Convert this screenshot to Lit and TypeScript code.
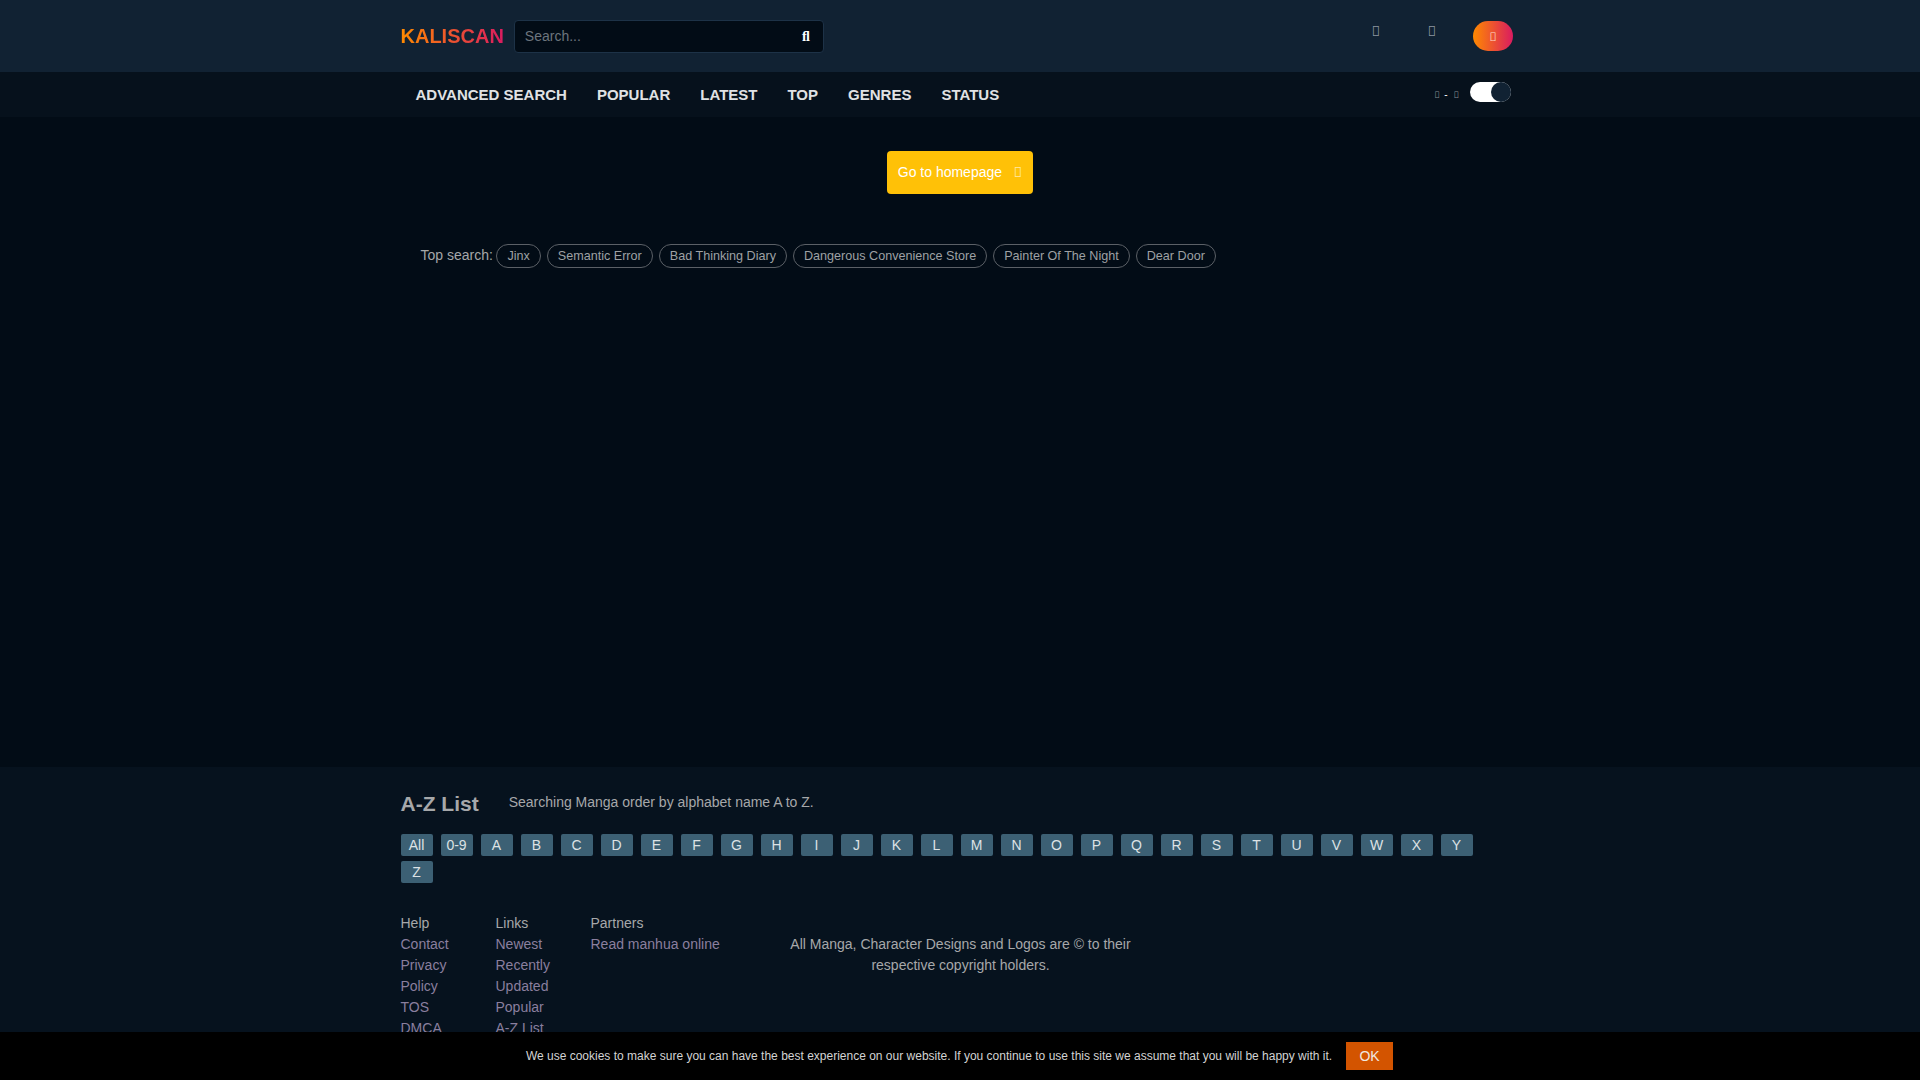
import { LitElement, html, css } from "lit";
import { customElement } from "lit/decorators.js";

const NAV = ["ADVANCED SEARCH", "POPULAR", "LATEST", "TOP", "GENRES", "STATUS"];
const TAGS = ["Jinx", "Semantic Error", "Bad Thinking Diary", "Dangerous Convenience Store", "Painter Of The Night", "Dear Door"];
const AZ = ["All", "0-9", ..."ABCDEFGHIJKLMNOPQRSTUVWXYZ".split("")];
const HELP = ["Contact", "Privacy Policy", "TOS", "DMCA"];
const LINKS = ["Newest", "Recently Updated", "Popular", "A-Z List"];

@customElement("app-root")
export class AppRoot extends LitElement {
  static styles = css`
    :host { display: block; height: 100vh; overflow: hidden; background: #020c16; color: #c5c6c7; font-family: "Liberation Sans", Arial, sans-serif; font-size: 14px; line-height: 21px; }
    .wrap { width: 1119px; margin: 0 auto; box-sizing: border-box; }
    a { color: inherit; text-decoration: none; }
    .fa { font-family: "Noto Sans", sans-serif; font-style: normal; }
    .top { background: #112233; height: 72px; }
    .top .wrap { display: flex; align-items: center; height: 72px; }
    .logo { font-size: 20px; font-weight: 700; line-height: 24px; background: linear-gradient(90deg, #ff8a00, #da1b60); -webkit-background-clip: text; background-clip: text; color: transparent; }
    .search { margin-left: 10px; width: 310px; height: 33px; box-sizing: border-box; border: 1px solid #1d3247; border-radius: 4px; background: #020c16; display: flex; align-items: center; justify-content: space-between; padding: 0 13px 0 10px; color: #6c757d; }
    .search b { color: #fff; font-family: "Liberation Serif", serif; font-size: 14px; font-weight: 700; }
    .icons { margin-left: auto; display: flex; align-items: center; }
    .ic { color: #8d97a1; font-size: 14px; width: 56px; text-align: center; margin-top: -12px; }
    .user { margin-left: 13px; margin-right: 6.5px; width: 40px; height: 30px; border-radius: 15px; background: linear-gradient(90deg, #ff8a00, #da1b60); color: #ffd9c8; font-size: 12px; display: flex; align-items: center; justify-content: center; }
    .nav { background: #06111c; height: 45px; }
    .nav .wrap { display: flex; align-items: center; height: 45px; }
    .nav a { color: #e0e2e4; font-size: 15px; font-weight: 600; margin-left: 15px; margin-right: 15px; }
    .mode { margin-left: auto; display: flex; align-items: center; color: #fff; font-size: 9px; margin-right: 8.5px; }
    .mode span { color: #8a9299; }
    .mode i { font-style: normal; font-size: 10px; margin: 0 6px 0 4.5px; }
    .toggle { margin-left: 11px; width: 41px; height: 20px; border-radius: 10px; background: #fff; position: relative; margin-top: -5px; }
    .toggle::after { content: ""; position: absolute; right: 0; top: 0; width: 20px; height: 20px; border-radius: 50%; background: #112233; }
    .main { height: 650px; padding-top: 34px; box-sizing: border-box; }
    .home { display: block; width: 146px; height: 43px; margin: 0 auto; box-sizing: border-box; background: #ffc107; border-radius: 4px; color: #fff; text-align: center; line-height: 42px; }
    .home span { color: #ffe9a8; margin-left: 4px; line-height: 1; }
    .tags { margin: 50px 0 0 20px; display: flex; align-items: center; gap: 6px; height: 24px; }
    .tags a { height: 24px; box-sizing: border-box; border: 1px solid #5b6066; border-radius: 12px; padding: 0 10px; font-size: 12.6px; line-height: 22px; color: #9ea1a4; }
    .tags label { color: #a5a7a9; margin-right: -2.5px; margin-top: -2px; }
    .foot { background: #06121e; height: 313px; padding-top: 22px; box-sizing: border-box; }
    .az-h { display: flex; align-items: baseline; }
    .az-h h3 { margin: 0; font-size: 21px; line-height: 30px; font-weight: 700; color: #a6a8aa; }
    .az-h span { margin-left: 30px; color: #a6a8aa; position: relative; top: -4px; }
    .letters { display: flex; flex-wrap: wrap; margin-top: 15px; }
    .letters a { width: 32px; height: 22px; margin: 0 8px 5px 0; box-sizing: border-box; border-radius: 2px; background: #3c6074; color: #dde2e5; text-align: center; line-height: 22px; }
    .cols { display: flex; margin-top: 25px; }
    .col { width: 58px; margin-right: 37px; color: #8a7f9e; }
    .col + .col { margin-right: 37px; }
    .col.p { width: 130px; margin-right: 60px; }
    .col h4 { margin: 0; font: inherit; color: #a6a8aa; }
    .col a { display: block; }
    .copy { width: 360px; text-align: center; margin-top: 21px; color: #a6a8aa; }
    .cookie { position: fixed; left: 0; right: 0; bottom: 0; height: 48px; background: #000; color: #d3d3d3; display: flex; align-items: center; justify-content: center; font-size: 12px; }
    .cookie b { font-weight: 400; margin-left: 14px; width: 47px; height: 28px; background: #d35400; color: #f0e8e0; text-align: center; line-height: 28px; font-size: 14px; margin-right: 1px; }
  `;

  render() {
    return html`
      <div class="top"><div class="wrap">
        <a class="logo">KALISCAN</a>
        <div class="search"><span>Search...</span><b>\ufb02</b></div>
        <div class="icons"><span class="ic fa">\uf02e</span><span class="ic fa">\uf0f3</span><div class="user fa">\uf007</div></div>
      </div></div>
      <div class="nav"><div class="wrap">
        ${NAV.map((n) => html`<a>${n}</a>`)}
        <div class="mode"><span class="fa">\uf185</span><i>-</i><span class="fa">\uf186</span><div class="toggle"></div></div>
      </div></div>
      <div class="main"><div class="wrap">
        <a class="home">Go to homepage &nbsp;<span class="fa">\uf061</span></a>
        <div class="tags"><label>Top search:</label>${TAGS.map((t) => html`<a>${t}</a>`)}</div>
      </div></div>
      <div class="foot"><div class="wrap">
        <div class="az-h"><h3>A-Z List</h3><span>Searching Manga order by alphabet name A to Z.</span></div>
        <div class="letters">${AZ.map((l) => html`<a>${l}</a>`)}</div>
        <div class="cols">
          <div class="col"><h4>Help</h4>${HELP.map((l) => html`<a>${l}</a>`)}</div>
          <div class="col"><h4>Links</h4>${LINKS.map((l) => html`<a>${l}</a>`)}</div>
          <div class="col p"><h4>Partners</h4><a>Read manhua online</a></div>
          <div class="copy">All Manga, Character Designs and Logos are © to their respective copyright holders.</div>
        </div>
      </div></div>
      <div class="cookie">We use cookies to make sure you can have the best experience on our website. If you continue to use this site we assume that you will be happy with it.<b>OK</b></div>
    `;
  }
}
